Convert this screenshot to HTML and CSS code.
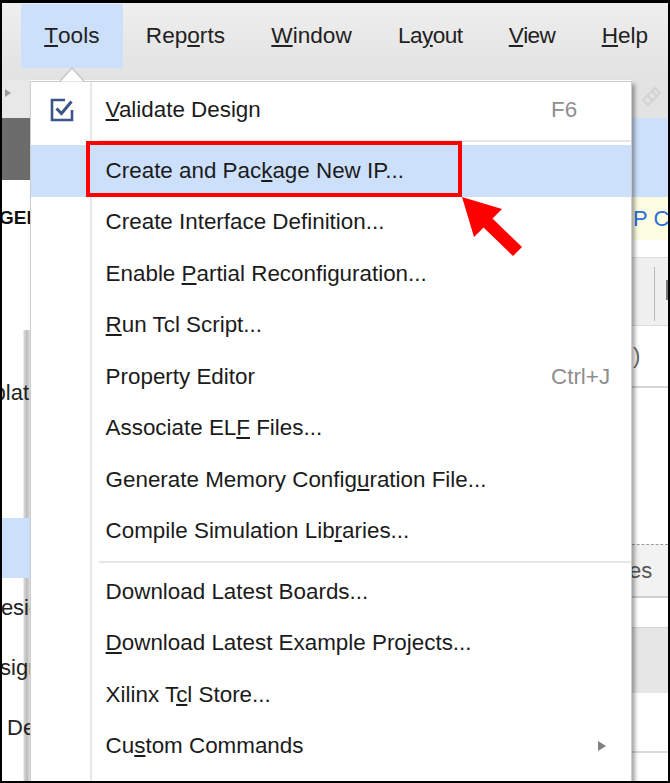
FILE: index.html
```html
<!DOCTYPE html>
<html>
<head>
<meta charset="utf-8">
<link rel="stylesheet" href="styles.css">
</head>
<body>
<div class="frame">
  <div class="menubar">
    <div class="mb-item active"><u>T</u>ools</div>
    <div class="mb-item">Rep<u>o</u>rts</div>
    <div class="mb-item"><u>W</u>indow</div>
    <div class="mb-item tight">La<u>y</u>out</div>
    <div class="mb-item tight"><u>V</u>iew</div>
    <div class="mb-item"><u>H</u>elp</div>
  </div>
  <div class="workspace">
    <div class="lp">
      <div class="lp-tb"><span class="lp-arrow"></span></div>
      <div class="lp-dark"></div>
      <div class="lp-upper">
        <div class="lp-row bold"><span class="t-ge">GENERAL</span></div>
      </div>
      <div class="lp-lower">
        <div class="lp-row pla"><span class="t-pla">Template</span></div>
        <div class="lp-row60 sel"></div>
        <div class="lp-row60"><span class="t-esi">Design</span></div>
        <div class="lp-row60"><span class="t-sig">Design</span></div>
        <div class="lp-row60"><span class="t-de">Des</span></div>
      </div>
    </div>
    <div class="center"></div>
    <div class="rp">
      <div class="rp-tb">
        <svg class="pin" width="22" height="22" viewBox="0 0 22 22"><path d="M3 14 L12 5 L17 10 L8 19 Z M7 9 L13 15 M12 5 L15 2 L20 7 L17 10" fill="none" stroke="#d3d3d3" stroke-width="2"/></svg>
      </div>
      <div class="rp-blue"></div>
      <div class="rp-yellow"><span>P Catalog</span></div>
      <div class="rp-white1"></div>
      <div class="rp-tool"><span class="vline"></span><span class="dk"></span></div>
      <div class="rp-paren"><span>)</span></div>
      <div class="rp-blank"></div>
      <div class="rp-es"><span>es</span></div>
      <div class="rp-white2"></div>
      <div class="rp-grey"></div>
      <div class="rp-white3"></div>
      <div class="rp-white4"></div>
    </div>
  </div>

  <div class="popup">
    <div class="mi">
      <span class="icon">
        <svg width="24" height="24" viewBox="0 0 24 24"><path d="M15 2 H2 V22 H22 V12" fill="none" stroke="#3b5686" stroke-width="2.6"/><path d="M6.5 10.5 L11.5 15.5 L21.5 3.5" fill="none" stroke="#3b5686" stroke-width="3"/></svg>
      </span>
      <span class="label"><u>V</u>alidate Design</span>
      <span class="sc">F6</span>
    </div>
    <div class="sep"></div>
    <div class="mi hl"><span class="label">Create and Pac<u>k</u>age New IP...</span></div>
    <div class="mi"><span class="label">Create Interface Definition...</span></div>
    <div class="mi"><span class="label">Enable <u>P</u>artial Reconfiguration...</span></div>
    <div class="mi"><span class="label"><u>R</u>un Tcl Script...</span></div>
    <div class="mi"><span class="label">Property Editor</span><span class="sc">Ctrl+J</span></div>
    <div class="mi"><span class="label">Associate EL<u>F</u> Files...</span></div>
    <div class="mi"><span class="label">Generate Memory Config<u>u</u>ration File...</span></div>
    <div class="mi"><span class="label">Compile Simulation Lib<u>r</u>aries...</span></div>
    <div class="sep"></div>
    <div class="mi"><span class="label">Download Latest Boards...</span></div>
    <div class="mi"><span class="label"><u>D</u>ownload Latest Example Projects...</span></div>
    <div class="mi"><span class="label">Xilinx T<u>c</u>l Store...</span></div>
    <div class="mi"><span class="label">Cu<u>s</u>tom Commands</span><span class="sc"><span class="sub"></span></span></div>
  </div>

  <svg class="overlay" width="666" height="778" viewBox="2 3 666 778">
    <polygon points="61,81.5 72,68.5 83,81.5" fill="#ffffff"/>
    <polyline points="60,81 72,68 84,81" fill="none" stroke="#c4c4c4" stroke-width="1.2"/>
    <rect x="88" y="143" width="372" height="52" fill="none" stroke="#ff0000" stroke-width="4"/>
    <polygon points="462,197 502,209 492.5,218.5 522,247 513,256 483.5,227.5 474,237" fill="#ff0000"/>
  </svg>
</div>
</body>
</html>
```

FILE: styles.css
```css
* { box-sizing: border-box; }
html, body { margin: 0; padding: 0; background: #000; }
body { width: 670px; height: 783px; overflow: hidden; }

.frame {
  width: 670px;
  height: 783px;
  border: 2px solid #000;
  border-top-width: 3px;
  position: relative;
  overflow: hidden;
  background: #fff;
  font-family: "Liberation Sans", Arial, sans-serif;
  color: #1b1b1b;
}

u { text-decoration-thickness: 1.5px; text-underline-offset: 2px; }

/* menubar */
.menubar {
  height: 77px;
  display: flex;
  align-items: flex-start;
  padding: 1px 0 0 19px;
  background: linear-gradient(#eeeeee, #e2e2e2);
}
.mb-item {
  height: 64px;
  display: flex;
  align-items: center;
  padding: 0 23.2px;
  font-size: 22.6px;
  color: #222;
}
.mb-item.tight { letter-spacing: -0.6px; }
.mb-item.active { background: #cde0fb; }

/* workspace */
.workspace { display: flex; height: 701px; }
.lp { width: 28px; display: flex; flex-direction: column; background: #fff; overflow: hidden; }
.center { flex: 1; background: #fff; }
.rp { width: 36px; display: flex; flex-direction: column; overflow: hidden; }

.lp-tb { height: 38px; background: #e8e8e8; }
.lp-arrow {
  display: block;
  width: 0; height: 0;
  margin: 9px 0 0 3px;
  border-left: 6px solid #9a9a9a;
  border-top: 4px solid transparent;
  border-bottom: 4px solid transparent;
}
.lp-dark { height: 62px; background: #6c6c6c; }
.lp-upper { height: 150px; padding-top: 18px; }
.lp-row {
  height: 40px;
  display: flex;
  align-items: center;
  white-space: nowrap;
  font-size: 22px;
}
.lp-row.bold { font-weight: bold; color: #111; font-size: 19px; }
.t-ge { margin-left: -3px; }
.lp-lower {
  flex: 1;
  display: flex;
  flex-direction: column;
  padding-top: 43px;
  background: linear-gradient(to right, #fff 21px, #d8d8d8 22px, #bcbcbc 25px, #d4d4d4 27px, #e6e6e6 28px);
}
.lp-row.pla { margin-bottom: 105px; color: #222; }
.t-pla { margin-left: -50px; }
.lp-row60 {
  height: 60px;
  display: flex;
  align-items: center;
  white-space: nowrap;
  font-size: 22px;
  color: #222;
}
.lp-row60.sel { background: #cde0fb; }
.t-esi { margin-left: -17px; }
.t-sig { margin-left: -30px; }
.t-de { margin-left: 5px; }

.rp-tb { height: 38px; background: #e3e3e3; padding: 6px 0 0 8px; }
.pin { display: block; }
.rp-blue { height: 79px; background: #cde0fb; }
.rp-yellow {
  height: 43px;
  background: #fdfde2;
  display: flex;
  align-items: center;
  white-space: nowrap;
  font-size: 22px;
  color: #2d6fd8;
  padding-left: 1px;
}
.rp-white1 { height: 18px; background: #fff; border-bottom: 1px solid #dcdcdc; }
.rp-tool { height: 67px; background: #f0f0f0; display: flex; align-items: flex-start; }
.vline { width: 1px; height: 54px; background: #b9b9b9; margin: 9px 0 0 22px; }
.dk { width: 2px; height: 20px; background: #7a7a7a; margin: 22px 0 0 11px; }
.rp-paren {
  height: 63px;
  background: #fff;
  border-top: 1px solid #dcdcdc;
  border-bottom: 2px solid #d6d6d6;
  display: flex;
  align-items: center;
  font-size: 22px;
  color: #666;
  padding-left: 1px;
}
.rp-blank { height: 157px; background: #fff; border-bottom: 1px dashed #9a9a9a; }
.rp-es {
  height: 53px;
  background: #f2f2f2;
  border-bottom: 2px solid #d0d0d0;
  display: flex;
  align-items: center;
  font-size: 22px;
  color: #555;
  white-space: nowrap;
}
.rp-es span { margin-left: -3px; }
.rp-white2 { height: 30px; background: #fff; border-bottom: 1px solid #d6d6d6; }
.rp-grey { height: 65px; background: #e6e6e6; }
.rp-white3 { height: 60px; background: #fff; border-bottom: 2px solid #dadada; }
.rp-white4 { flex: 1; background: #fff; }

/* popup */
.popup {
  position: absolute;
  left: 28px;
  top: 78px;
  width: 602px;
  height: 720px;
  border: 1px solid #cdcdcd;
  padding-top: 2.5px;
  background: linear-gradient(to right, #fff 59px, #e8e8e8 59px, #e8e8e8 61px, #fff 61px);
  box-shadow: 3px 3px 4px rgba(0, 0, 0, 0.35);
}
.mi {
  height: 51.5px;
  display: flex;
  align-items: center;
  font-size: 22.4px;
  color: #1b1b1b;
}
.mi.hl { background: #cde0fb; }
.icon {
  width: 59px;
  display: flex;
  justify-content: center;
  padding-left: 2px;
}
.icon svg { display: block; }
.label { white-space: nowrap; padding-left: 74.6px; }
.icon + .label { padding-left: 15.6px; }
.sc {
  margin-left: auto;
  width: 80px;
  color: #8e8e8e;
  white-space: nowrap;
  display: flex;
  align-items: center;
}
.sub {
  display: block;
  width: 0; height: 0;
  margin-left: 47px;
  border-left: 8px solid #808080;
  border-top: 5.5px solid transparent;
  border-bottom: 5.5px solid transparent;
}
.sep {
  height: 9px;
  padding: 3.5px 0 0 68px;
}
.sep::before {
  content: "";
  display: block;
  height: 2px;
  background: #e6e6e6;
}

.overlay {
  position: absolute;
  left: 0;
  top: 0;
  pointer-events: none;
}
```
